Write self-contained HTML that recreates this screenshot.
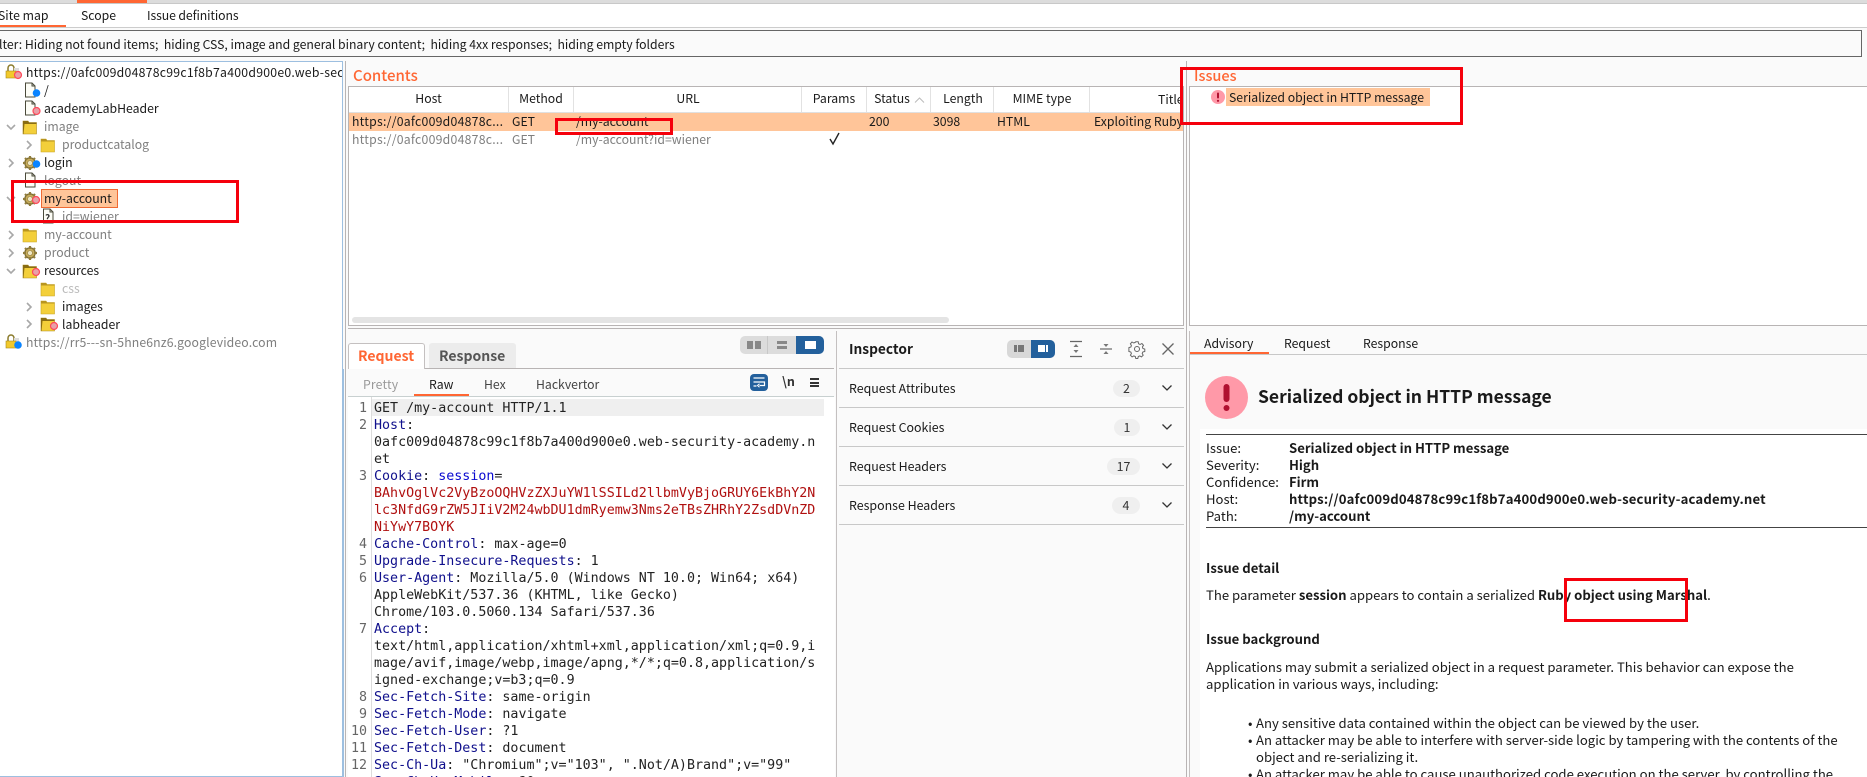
<!DOCTYPE html>
<html><head><meta charset="utf-8">
<style>
html,body{margin:0;padding:0;width:1867px;height:777px;overflow:hidden;background:#fafafa}
body{position:relative;font-family:"Noto Sans CJK JP","Liberation Sans",sans-serif;font-size:12.25px;color:#1a1a1a}
.a{position:absolute}
.t{position:absolute;white-space:pre;line-height:18px;height:18px;margin-top:-1px}
.p{font-size:13.13px;margin-top:0}
.i{font-size:12.4px}
.g{color:#7f7f7f}
.l{position:absolute;background:#b8b4b4}
.r{position:absolute;border:3px solid #f5000c;box-sizing:border-box;z-index:20}
.h{position:absolute;text-align:center;line-height:18px;white-space:pre;margin-top:-1px}
.b{font-weight:700}
pre{margin:0;position:absolute;font-family:"DejaVu Sans Mono","Liberation Mono",monospace;font-size:13.33px;line-height:17px;color:#222}
.k{color:#10108c}.s{color:#0a0ad0}.v{color:#b01010}
.bd{position:absolute;background:#efefef;border-radius:9px;height:17px;line-height:17px;text-align:center;color:#333;right:727px;font-size:12.4px}
svg{position:absolute;overflow:visible}
</style></head><body>
<svg width="0" height="0" style="position:absolute"><defs>
<symbol id="fo" viewBox="0 0 16 16"><path d="M1 2h5l1 1.500h7.500V15H1z" fill="#f3cf3a" stroke="#b08d1a" stroke-width=".6"/><path d="M1 2h5l1 1.500h7.500V5H2.500L1.500 15H1z" fill="#8a6d12"/></symbol>
<symbol id="fc" viewBox="0 0 16 16"><path d="M1 2h5l1 1.500h7.500V15H1z" fill="#f3cf3a" stroke="#c9a521" stroke-width=".6"/><path d="M1 2h5l1 1.500h7.500V4.500H1z" fill="#b8951f"/></symbol>
<symbol id="ge" viewBox="0 0 16 16"><circle cx="8" cy="8" r="5.200" fill="#c8ad5c" stroke="#7a6a30" stroke-width="1.200"/><path d="M8 1v3M8 12v3M1 8h3M12 8h3M3 3l2 2M11 11l2 2M13 3l-2 2M5 11l-2 2" stroke="#8f7c3c" stroke-width="2.200"/><circle cx="8" cy="8" r="2.500" fill="#efe6c4" stroke="#8f7c3c" stroke-width=".6"/></symbol>
<symbol id="do" viewBox="0 0 16 16"><path d="M3.500 1H10l3 3v11H3.500z" fill="#fdfdf6" stroke="#4a4a3a" stroke-width="1"/><path d="M10 1v3h3" fill="none" stroke="#4a4a3a"/></symbol>
<symbol id="lk" viewBox="0 0 16 16"><path d="M4 7V4a3 3 0 016 0v3" fill="none" stroke="#8a7a2a" stroke-width="1.500"/><rect x="10" y="4" width="5" height="10" fill="#ddd"/><rect x="2" y="7" width="10" height="7" fill="#f2c92c" stroke="#a88a18" stroke-width=".6"/></symbol>
<symbol id="cr" viewBox="0 0 10 10"><path d="M3 1l4 4-4 4" fill="none" stroke="#a8a8a8" stroke-width="1.600"/></symbol>
<symbol id="cd" viewBox="0 0 10 10"><path d="M1 3l4 4 4-4" fill="none" stroke="#a8a8a8" stroke-width="1.600"/></symbol>
</defs></svg>

<!-- top strip -->
<div class="a" style="left:0;top:0;width:1867px;height:3px;background:#dcdcdc"></div>
<div class="a" style="left:0;top:3px;width:1867px;height:1px;background:#c8c8c8"></div>
<div class="a" style="left:77px;top:0;width:70px;height:3px;background:#ff6633"></div>
<div class="a" style="left:0;top:4px;width:1867px;height:24px;background:#fff"></div>
<div class="t" style="left:-2px;top:7px">Site map</div>
<div class="t" style="left:81px;top:7px">Scope</div>
<div class="t" style="left:147px;top:7px;letter-spacing:-.1px">Issue definitions</div>
<div class="a" style="left:0;top:25px;width:66px;height:2px;background:#ff6633"></div>
<div class="l" style="left:0;top:27px;width:1867px;height:1px;background:#ccc"></div>
<!-- filter -->
<div class="a" style="left:-2px;top:30px;width:1864px;height:27px;border:1px solid #666;box-sizing:border-box;background:#fafafa"></div>
<div class="t" style="left:-1px;top:36px;width:720px;overflow:hidden;letter-spacing:-.02px">lter: Hiding not found items;  hiding CSS, image and general binary content;  hiding 4xx responses;  hiding empty folders</div>

<!-- tree -->
<div class="a" style="left:-2px;top:61px;width:345px;height:716px;border:1px solid #9dbfe0;box-sizing:border-box;background:#fff"></div>
<div class="l" style="left:345px;top:61px;width:1px;height:716px"></div>
<div class="a" style="left:0;top:62px;width:342px;height:715px;overflow:hidden">
<svg style="left:4px;top:2px" width="16" height="16"><use href="#lk"/></svg>
<div class="t" style="left:26px;top:2px;letter-spacing:.25px">https://0afc009d04878c99c1f8b7a400d900e0.web-security</div>
<svg style="left:22px;top:20px" width="16" height="16"><use href="#do"/></svg>
<div class="t" style="left:44px;top:20px">/</div>
<svg style="left:22px;top:38px" width="16" height="16"><use href="#do"/></svg>
<div class="t" style="left:44px;top:38px">academyLabHeader</div>
<svg style="left:6px;top:60px" width="10" height="10"><use href="#cd"/></svg>
<svg style="left:22px;top:57px" width="16" height="16"><use href="#fo"/></svg>
<div class="t g" style="left:44px;top:56px">image</div>
<svg style="left:24px;top:78px" width="10" height="10"><use href="#cr"/></svg>
<svg style="left:40px;top:75px" width="16" height="16"><use href="#fc"/></svg>
<div class="t g" style="left:62px;top:74px">productcatalog</div>
<svg style="left:6px;top:96px" width="10" height="10"><use href="#cr"/></svg>
<svg style="left:22px;top:93px" width="16" height="16"><use href="#ge"/></svg>
<div class="t" style="left:44px;top:92px">login</div>
<svg style="left:22px;top:110px" width="16" height="16"><use href="#do"/></svg>
<div class="t g" style="left:44px;top:110px">logout</div>
<svg style="left:6px;top:132px" width="10" height="10"><use href="#cd"/></svg>
<svg style="left:22px;top:129px" width="16" height="16"><use href="#ge"/></svg>
<div class="a" style="left:41px;top:127px;width:77px;height:19px;background:#ffc599;border:1px solid #f06a33;box-sizing:border-box"></div>
<div class="t" style="left:44px;top:128px">my-account</div>
<svg style="left:40px;top:146px" width="16" height="16"><use href="#do"/></svg>
<div class="t g" style="left:45px;top:148px;font-size:10px;color:#333;font-weight:700">?</div>
<div class="t g" style="left:62px;top:146px">id=wiener</div>
<svg style="left:6px;top:168px" width="10" height="10"><use href="#cr"/></svg>
<svg style="left:22px;top:165px" width="16" height="16"><use href="#fc"/></svg>
<div class="t g" style="left:44px;top:164px">my-account</div>
<svg style="left:6px;top:186px" width="10" height="10"><use href="#cr"/></svg>
<svg style="left:22px;top:183px" width="16" height="16"><use href="#ge"/></svg>
<div class="t g" style="left:44px;top:182px">product</div>
<svg style="left:6px;top:204px" width="10" height="10"><use href="#cd"/></svg>
<svg style="left:22px;top:201px" width="16" height="16"><use href="#fo"/></svg>
<div class="t" style="left:44px;top:200px">resources</div>
<svg style="left:40px;top:219px" width="16" height="16"><use href="#fc"/></svg>
<div class="t" style="left:62px;top:218px;color:#bbb">css</div>
<svg style="left:24px;top:240px" width="10" height="10"><use href="#cr"/></svg>
<svg style="left:40px;top:237px" width="16" height="16"><use href="#fc"/></svg>
<div class="t" style="left:62px;top:236px">images</div>
<svg style="left:24px;top:257px" width="10" height="10"><use href="#cr"/></svg>
<svg style="left:40px;top:254px" width="16" height="16"><use href="#fo"/></svg>
<div class="t" style="left:62px;top:254px">labheader</div>
<svg style="left:4px;top:272px" width="16" height="16"><use href="#lk"/></svg>
<div class="t g" style="left:26px;top:272px;letter-spacing:.12px">https://rr5---sn-5hne6nz6.googlevideo.com</div>
<!-- dots -->
<svg style="left:0;top:0" width="342" height="320">
<g fill="#e8a0a8" stroke="#ff4a5a" stroke-width="1.200">
<circle cx="18" cy="13" r="3.500"/><circle cx="36.500" cy="49" r="3.500"/>
<circle cx="36" cy="138" r="3.500"/><circle cx="36" cy="210" r="3.500"/><circle cx="54" cy="264" r="3.500"/>
</g>
<g fill="#0a84ff"><circle cx="36.500" cy="31" r="3.800"/><circle cx="36.500" cy="102" r="3.800"/><circle cx="18" cy="283" r="3.800"/></g>
</svg>
</div>

<!-- contents -->
<div class="t" style="left:353px;top:68px;color:#ff6633;font-size:15px;font-weight:500">Contents</div>
<div class="a" style="left:348px;top:86px;width:836px;height:240px;border:1px solid #b8b4b4;box-sizing:border-box;background:#fff;overflow:hidden" id="tb">
<div class="a" style="left:0;top:0;width:836px;height:25px;background:#fff;border-bottom:1px solid #e0e0e0"></div>
<div class="h" style="left:0;top:3px;width:159px">Host</div>
<div class="h" style="left:160px;top:3px;width:64px">Method</div>
<div class="h" style="left:225px;top:3px;width:228px">URL</div>
<div class="h" style="left:453px;top:3px;width:64px">Params</div>
<div class="h" style="left:518px;top:3px;width:50px">Status</div>
<svg style="left:566px;top:10px" width="9" height="6"><path d="M0 5.500L4.500 1 9 5.500" fill="none" stroke="#bbb" stroke-width="1"/></svg>
<div class="h" style="left:582px;top:3px;width:64px">Length</div>
<div class="h" style="left:645px;top:3px;width:96px">MIME type</div>
<div class="t" style="left:809px;top:4px">Title</div>
<div class="a" style="left:0;top:26px;width:834px;height:18px;background:#ffc599"></div>
<div class="t" style="left:3px;top:26px;letter-spacing:.25px">https://0afc009d04878c...</div>
<div class="t" style="left:163px;top:26px">GET</div>
<div class="t" style="left:227px;top:26px">/my-account</div>
<div class="t" style="left:520px;top:26px">200</div>
<div class="t" style="left:584px;top:26px">3098</div>
<div class="t" style="left:648px;top:26px">HTML</div>
<div class="t" style="left:745px;top:26px">Exploiting Ruby deserializ</div>
<div class="t g" style="left:3px;top:44px;letter-spacing:.25px">https://0afc009d04878c...</div>
<div class="t g" style="left:163px;top:44px">GET</div>
<div class="t g" style="left:227px;top:44px">/my-account?id=wiener</div>
<svg style="left:480px;top:45px" width="12" height="14"><path d="M1 7l3 5 6-11" fill="none" stroke="#222" stroke-width="1.400"/></svg>
<div class="l" style="left:159px;top:0;width:1px;height:25px;background:#e2e2e2"></div>
<div class="l" style="left:224px;top:0;width:1px;height:25px;background:#e2e2e2"></div>
<div class="l" style="left:452px;top:0;width:1px;height:25px;background:#e2e2e2"></div>
<div class="l" style="left:517px;top:0;width:1px;height:25px;background:#e2e2e2"></div>
<div class="l" style="left:581px;top:0;width:1px;height:25px;background:#e2e2e2"></div>
<div class="l" style="left:644px;top:0;width:1px;height:25px;background:#e2e2e2"></div>
<div class="l" style="left:740px;top:0;width:1px;height:25px;background:#e2e2e2"></div>
<div class="a" style="left:3px;top:230px;width:597px;height:6px;border-radius:3px;background:#e4e4e4"></div>
</div>
<div class="l" style="left:348px;top:328px;width:836px;height:1px"></div>

<!-- issues -->
<div class="l" style="left:1186px;top:61px;width:1px;height:716px"></div>
<div class="t" style="left:1194px;top:68px;color:#ff6633;font-size:14.5px;font-weight:500">Issues</div>
<div class="a" style="left:1189px;top:86px;width:680px;height:240px;border:1px solid #b8b4b4;box-sizing:border-box;background:#fff"></div>
<div class="a" style="left:1226px;top:88px;width:204px;height:18px;background:#ffc599"></div>
<div class="t" style="left:1229px;top:89px">Serialized object in HTTP message</div>
<svg style="left:1211px;top:90px" width="14" height="14"><circle cx="7" cy="7" r="7" fill="#ff99a8"/><rect x="6" y="2.500" width="2" height="6" rx="1" fill="#b01030"/><circle cx="7" cy="10.800" r="1.100" fill="#b01030"/></svg>

<!-- request panel -->
<div class="a" style="left:348px;top:343px;width:77px;height:26px;background:#fff;border:1px solid #c4c0c0;border-bottom:none;box-sizing:border-box;border-radius:3px 3px 0 0"></div>
<div class="t b" style="left:358px;top:348px;color:#ff6633;font-size:14px">Request</div>
<div class="a" style="left:429px;top:343px;width:87px;height:25px;background:#ececec;border-radius:3px 3px 0 0"></div>
<div class="t b" style="left:439px;top:348px;color:#555;font-size:14px">Response</div>
<div class="l" style="left:425px;top:368px;width:409px;height:1px"></div>
<div class="a" style="left:740px;top:336px;width:84px;height:18px;background:#dcdcdc;border-radius:5px"></div>
<div class="a" style="left:796px;top:336px;width:28px;height:18px;background:#23609c;border-radius:0 5px 5px 0"></div>
<div class="a" style="left:767px;top:336px;width:1px;height:18px;background:#c8c8c8"></div>
<div class="a" style="left:747px;top:341px;width:6px;height:8px;background:#888"></div>
<div class="a" style="left:755px;top:341px;width:6px;height:8px;background:#888"></div>
<div class="a" style="left:777px;top:341px;width:10px;height:3px;background:#888"></div>
<div class="a" style="left:777px;top:346px;width:10px;height:3px;background:#888"></div>
<div class="a" style="left:805px;top:341px;width:11px;height:8px;background:#fff"></div>
<div class="t" style="left:363px;top:376px;color:#999;letter-spacing:.15px">Pretty</div>
<div class="t" style="left:429px;top:376px">Raw</div>
<div class="t" style="left:484px;top:376px;color:#444">Hex</div>
<div class="t" style="left:536px;top:376px;color:#444">Hackvertor</div>
<div class="a" style="left:414px;top:394px;width:55px;height:2px;background:#ff6633"></div>
<div class="a" style="left:348px;top:396px;width:486px;height:1px;background:#c8d0d0"></div>
<div class="a" style="left:750px;top:374px;width:18px;height:17px;background:#23609c;border-radius:4px"></div>
<svg style="left:750px;top:374px" width="18" height="17"><path d="M3.500 4h11M3.500 8h11v3.500h-5M3.500 12h3" fill="none" stroke="#fff" stroke-width="1.200"/><path d="M9.500 9.800l-2 1.700 2 1.700" fill="none" stroke="#fff" stroke-width="1"/></svg>
<div class="t b" style="left:782px;top:373px;font-size:12.5px;color:#333">\n</div>
<div class="a" style="left:810px;top:378px;width:9px;height:2px;background:#333"></div>
<div class="a" style="left:810px;top:381.500px;width:9px;height:2px;background:#333"></div>
<div class="a" style="left:810px;top:385px;width:9px;height:2px;background:#333"></div>
<div class="a" style="left:348px;top:397px;width:487px;height:380px;background:#fff"></div>
<div class="a" style="left:372px;top:399px;width:452px;height:17px;background:#efefef"></div>
<div class="a" style="left:371px;top:397px;width:1px;height:380px;background:#dcdcdc"></div>
<div class="a" style="left:343px;top:369px;width:1px;height:408px;background:#9dbfe0"></div>
<div class="a" style="left:348px;top:398px;width:490px;height:379px;overflow:hidden">
<pre style="left:0;top:2px;width:19px;text-align:right;color:#666">1
2


3



4
5
6


7



8
9
10
11
12
</pre>
<pre style="left:26px;top:2px">GET /my-account HTTP/1.1
<span class="k">Host</span>:
0afc009d04878c99c1f8b7a400d900e0.web-security-academy.n
et
<span class="k">Cookie</span>: <span class="s">session</span>=
<span class="v">BAhvOglVc2VyBzoOQHVzZXJuYW1lSSILd2llbmVyBjoGRUY6EkBhY2N
lc3NfdG9rZW5JIiV2M24wbDU1dmRyemw3Nms2eTBsZHRhY2ZsdDVnZD
NiYwY7BOYK</span>
<span class="k">Cache-Control</span>: max-age=0
<span class="k">Upgrade-Insecure-Requests</span>: 1
<span class="k">User-Agent</span>: Mozilla/5.0 (Windows NT 10.0; Win64; x64)
AppleWebKit/537.36 (KHTML, like Gecko)
Chrome/103.0.5060.134 Safari/537.36
<span class="k">Accept</span>:
text/html,application/xhtml+xml,application/xml;q=0.9,i
mage/avif,image/webp,image/apng,*/*;q=0.8,application/s
igned-exchange;v=b3;q=0.9
<span class="k">Sec-Fetch-Site</span>: same-origin
<span class="k">Sec-Fetch-Mode</span>: navigate
<span class="k">Sec-Fetch-User</span>: ?1
<span class="k">Sec-Fetch-Dest</span>: document
<span class="k">Sec-Ch-Ua</span>: "Chromium";v="103", ".Not/A)Brand";v="99"
<span class="k">Sec-Ch-Ua-Mobile</span>: ?0</pre>
</div>

<!-- inspector -->
<div class="a" style="left:836px;top:331px;width:1px;height:446px;background:#c4c0c0"></div>
<div class="a" style="left:839px;top:331px;width:345px;height:446px;background:#fafafa"></div>
<div class="t b" style="left:849px;top:340px;font-size:13.7px">Inspector</div>
<div class="a" style="left:1007px;top:340px;width:48px;height:18px;background:#d8d8d8;border-radius:5px"></div>
<div class="a" style="left:1031px;top:340px;width:24px;height:18px;background:#23609c;border-radius:0 5px 5px 0"></div>
<div class="a" style="left:1014px;top:345px;width:10px;height:7px;background:#777"></div>
<div class="a" style="left:1017px;top:345px;width:1px;height:7px;background:#d8d8d8"></div>
<div class="a" style="left:1038px;top:345px;width:10px;height:7px;background:#fff"></div>
<div class="a" style="left:1045px;top:345px;width:1px;height:7px;background:#23609c"></div>
<svg style="left:1068px;top:340px" width="16" height="18"><path d="M2 1.500h12M2 16.500h12" stroke="#666" stroke-width="1.200"/><path d="M8 4l-2.500 3h5zM8 13l-2.500-3h5z" fill="#777"/></svg>
<svg style="left:1098px;top:340px" width="16" height="18"><path d="M2 9h12" stroke="#666" stroke-width="1.200"/><path d="M8 7l-2.500-3h5zM8 11l-2.500 3h5z" fill="#777"/></svg>
<svg style="left:1129px;top:341px" width="16" height="16" viewBox="0 0 16 16"><path d="M6.800 .8h2.400l.4 2 1.500.7 1.800-1 1.600 1.800-1.100 1.700.5 1.500 1.900.6v2.400l-2 .5-.6 1.500 1 1.700-1.700 1.700-1.700-1-1.500.6-.5 2H6.800l-.5-2-1.500-.6-1.700 1-1.700-1.700 1-1.700-.6-1.500-1.900-.5V6.600l2-.6.500-1.500-1-1.700L3 1l1.700 1 1.500-.6z" fill="none" stroke="#666" stroke-width="1"/><circle cx="8" cy="8" r="2.500" fill="none" stroke="#666"/></svg>
<svg style="left:1162px;top:343px" width="12" height="12"><path d="M.5.500l11 11M11.500.500l-11 11" stroke="#666" stroke-width="1.300"/></svg>
<div class="l" style="left:839px;top:368px;width:345px;height:1px;background:#c8c8c8"></div>
<div class="l" style="left:839px;top:407px;width:345px;height:1px;background:#c8c8c8"></div>
<div class="l" style="left:839px;top:446px;width:345px;height:1px;background:#c8c8c8"></div>
<div class="l" style="left:839px;top:485px;width:345px;height:1px;background:#c8c8c8"></div>
<div class="l" style="left:839px;top:524px;width:345px;height:1px;background:#c8c8c8"></div>
<div class="t i" style="left:849px;top:380px">Request Attributes</div>
<div class="t i" style="left:849px;top:419px">Request Cookies</div>
<div class="t i" style="left:849px;top:458px">Request Headers</div>
<div class="t i" style="left:849px;top:497px">Response Headers</div>
<div class="bd" style="top:380px;width:27px">2</div>
<div class="bd" style="top:419px;width:26px">1</div>
<div class="bd" style="top:458px;width:33px">17</div>
<div class="bd" style="top:497px;width:28px">4</div>
<svg style="left:1162px;top:385px" width="10" height="6"><path d="M.5.500L5 5 9.500.500" fill="none" stroke="#333" stroke-width="1.300"/></svg>
<svg style="left:1162px;top:424px" width="10" height="6"><path d="M.5.500L5 5 9.500.500" fill="none" stroke="#333" stroke-width="1.300"/></svg>
<svg style="left:1162px;top:463px" width="10" height="6"><path d="M.5.500L5 5 9.500.500" fill="none" stroke="#333" stroke-width="1.300"/></svg>
<svg style="left:1162px;top:502px" width="10" height="6"><path d="M.5.500L5 5 9.500.500" fill="none" stroke="#333" stroke-width="1.300"/></svg>

<!-- advisory -->
<div class="a" style="left:1189px;top:331px;width:1px;height:446px;background:#c4c0c0"></div>
<div class="t" style="left:1204px;top:335px">Advisory</div>
<div class="t" style="left:1284px;top:335px">Request</div>
<div class="t" style="left:1363px;top:335px">Response</div>
<div class="a" style="left:1190px;top:352px;width:79px;height:2px;background:#ff6633"></div>
<div class="a" style="left:1190px;top:354px;width:677px;height:1px;background:#c8c8c8"></div>
<svg style="left:1205px;top:376px" width="43" height="43"><circle cx="21.500" cy="21.500" r="21.500" fill="#ff99a8"/><rect x="18.500" y="8" width="6" height="18" rx="3" fill="#b01030"/><circle cx="21.500" cy="32" r="3" fill="#b01030"/></svg>
<div class="t b" style="left:1258px;top:386px;font-size:17.5px;height:24px;line-height:24px;font-weight:700">Serialized object in HTTP message</div>
<div class="a" style="left:1200px;top:429px;width:667px;height:348px;background:#fff"></div>
<div class="a" style="left:1206px;top:434px;width:661px;height:1px;background:#444"></div>
<div class="t p" style="left:1206px;top:439px">Issue:</div><div class="t b p" style="left:1289px;top:439px">Serialized object in HTTP message</div>
<div class="t p" style="left:1206px;top:456px">Severity:</div><div class="t b p" style="left:1289px;top:456px">High</div>
<div class="t p" style="left:1206px;top:473px">Confidence:</div><div class="t b p" style="left:1289px;top:473px">Firm</div>
<div class="t p" style="left:1206px;top:490px">Host:</div><div class="t b p" style="left:1289px;top:490px;letter-spacing:.16px">https://0afc009d04878c99c1f8b7a400d900e0.web-security-academy.net</div>
<div class="t p" style="left:1206px;top:507px">Path:</div><div class="t b p" style="left:1289px;top:507px">/my-account</div>
<div class="a" style="left:1206px;top:527px;width:661px;height:1px;background:#444"></div>
<div class="t b p" style="left:1206px;top:559px">Issue detail</div>
<div class="t p" style="left:1206px;top:586px">The parameter <span class="b">session</span> appears to contain a serialized <span class="b">Ruby object using Marshal</span>.</div>
<div class="t b p" style="left:1206px;top:630px">Issue background</div>
<div class="t p" style="left:1206px;top:658px">Applications may submit a serialized object in a request parameter. This behavior can expose the</div>
<div class="t p" style="left:1206px;top:675px">application in various ways, including:</div>
<div class="t p" style="left:1248px;top:714px">•</div><div class="t p" style="left:1256px;top:714px">Any sensitive data contained within the object can be viewed by the user.</div>
<div class="t p" style="left:1248px;top:731px">•</div><div class="t p" style="left:1256px;top:731px">An attacker may be able to interfere with server-side logic by tampering with the contents of the</div>
<div class="t p" style="left:1256px;top:748px">object and re-serializing it.</div>
<div class="t p" style="left:1248px;top:765px">•</div><div class="t p" style="left:1256px;top:765px">An attacker may be able to cause unauthorized code execution on the server, by controlling the</div>

<!-- red annotation boxes -->
<div class="r" style="left:11px;top:180px;width:228px;height:43px"></div>
<div class="r" style="left:555px;top:118px;width:118px;height:17px"></div>
<div class="r" style="left:1180px;top:67px;width:283px;height:58px"></div>
<div class="r" style="left:1564px;top:578px;width:124px;height:44px"></div>
</body></html>
